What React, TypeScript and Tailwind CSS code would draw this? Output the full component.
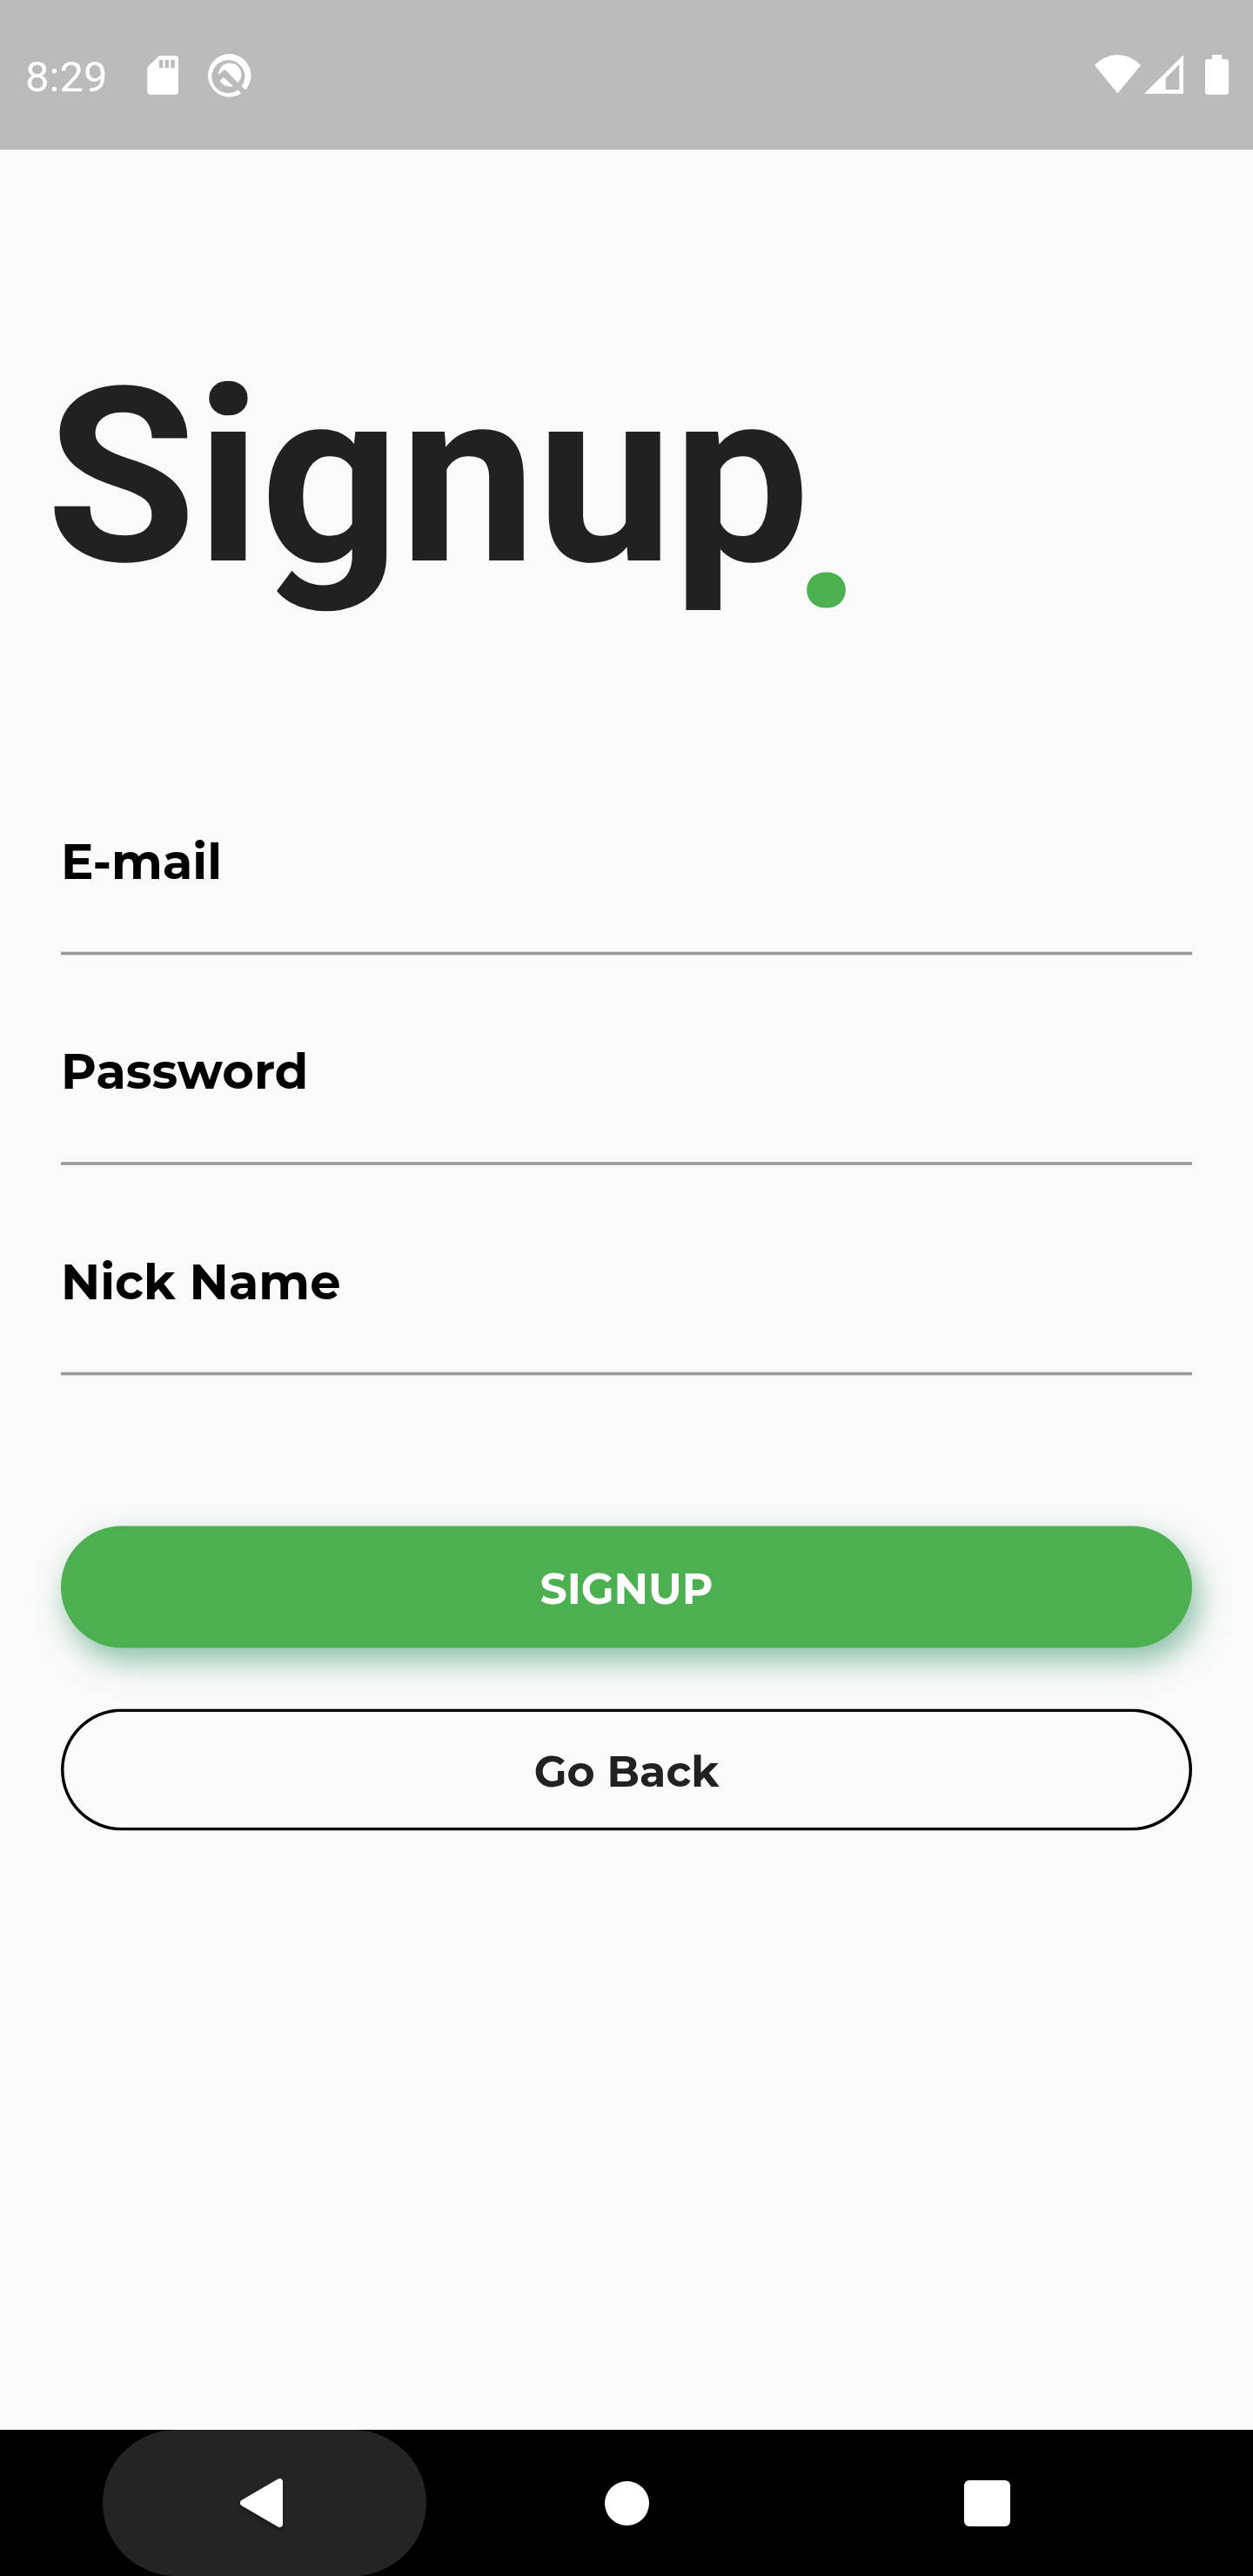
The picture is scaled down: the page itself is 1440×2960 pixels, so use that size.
function StatusBar() {
  return (
    <header className="flex h-[172px] shrink-0 items-start bg-[#bbbbbb] pl-[29px] text-white">
      <span className="mt-[60px] w-[140px] font-['Roboto',sans-serif] text-[49px] leading-[57px] font-normal">8:29</span>
      <svg className="mt-16 h-[45px] w-[37px]" viewBox="507 72 111 135" fill="currentColor" fillRule="evenodd">
        <path d="M549 72H604Q615 72 615 83V195Q615 206 604 206H519Q508 206 508 195V112ZM549 86V114H562V86ZM569 86V114H582V86ZM589 86V114H602V86Z" />
      </svg>
      <svg className="mt-[60px] ml-[33px] h-[52px] w-[51px]" viewBox="717 60 153 156" fill="currentColor">
        <path d="M832 202A74 74 0 1 1 846 190L833 178A57 57 0 1 0 821 190Z" />
        <path d="M753 138L775 119L820 165A39.5 39.5 0 1 0 753 138Z" />
        <path d="M758 158L771 146L804 177A40 40 0 0 1 758 158Z" />
      </svg>
      <div className="mt-[62px] ml-auto flex pr-7">
        <svg className="h-[46px] w-[53px]" viewBox="84 66 159 138" fill="currentColor">
          <path d="M163.500 202L84 105Q119 69 163.500 69Q208 69 243 105Z" />
        </svg>
        <svg className="ml-1 h-[46px] w-[45px]" viewBox="255 66 135 138" fill="currentColor" fillRule="evenodd">
          <path d="M255 203.500L390 70V203.500ZM329 149V189H376V102Z" />
        </svg>
        <svg className="ml-[25px] h-[47px] w-[27px]" viewBox="465 66 81 141" fill="currentColor">
          <rect x="489" y="69" width="34" height="24" />
          <rect x="465" y="84" width="81" height="122" rx="9" />
        </svg>
      </div>
    </header>
  );
}

function Title() {
  return (
    <h1 className="mt-[212px] ml-[53px] flex h-[384px] items-start font-['Roboto',sans-serif] text-[280px] leading-[328px] font-bold text-[#212121]">
      <span className="w-[857px]">Signup</span>
      <span className="mt-[53px] text-[#4caf50]">.</span>
    </h1>
  );
}

export default function App() {
  return (
    <div className="flex h-[2960px] w-[1440px] flex-col overflow-hidden bg-[#fafafa] font-['Montserrat','Inter',sans-serif] font-bold">
      <StatusBar />
      <Title />
      <main className="flex flex-col px-[70px]">
        <div className="mt-[188px] flex h-[142px] flex-col justify-between">
          <label className="text-[56px] leading-[68px] text-black">E-mail</label>
          <div className="h-[5px] border-y border-[#dedede] bg-[#9a9a9a]" />
        </div>
        <div className="mt-[99px] flex h-[142px] flex-col justify-between">
          <label className="text-[56px] leading-[68px] text-black">Password</label>
          <div className="h-1 border-y border-[#b0b1b0] bg-[#969796]" />
        </div>
        <div className="mt-[100px] flex h-[142px] flex-col justify-between">
          <label className="text-[56px] leading-[68px] text-black">Nick Name</label>
          <div className="h-[5px] border-y border-[#dedede] bg-[#9a9a9a]" />
        </div>
        <button className="mt-[172px] h-[140px] translate-y-[0.5px] rounded-full bg-[#4caf50] pt-[3px] text-[49px] text-white shadow-[7px_15px_32px_1px_rgba(42,140,92,0.5)]">
          SIGNUP
        </button>
        <button className="mt-[70px] h-[140px] translate-y-[0.5px] rounded-full pt-[3px] text-[49px] text-[#212121] shadow-[inset_0_0_0_3.5px_#000]">
          Go Back
        </button>
      </main>
      <nav className="mt-auto flex h-[168px] shrink-0 items-center bg-black pl-[118px] text-white">
        <div className="flex h-[168px] w-[372px] items-center rounded-full bg-[#242424] pl-[157px]">
          <svg className="h-[58px] w-[51px] overflow-visible drop-shadow-[0_3px_2px_rgba(0,0,0,0.3)]" viewBox="555 231 153 174" fill="currentColor" stroke="currentColor" strokeWidth="22" strokeLinejoin="round">
            <path d="M569 318L694 245V391Z" />
          </svg>
        </div>
        <div className="ml-[205px] size-[51px] rounded-full bg-white" />
        <div className="ml-[362px] size-[53px] rounded-md bg-white" />
      </nav>
    </div>
  );
}
